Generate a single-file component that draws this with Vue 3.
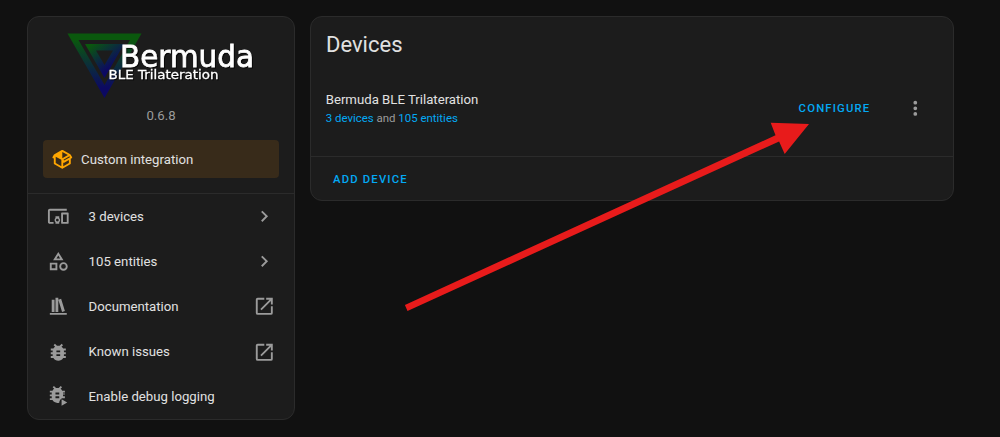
<template>
  <div class="page">
    <aside class="card info-card">
      <div class="brand">
        <svg class="logo" width="190" height="68" viewBox="0 0 190 68">
          <defs>
            <linearGradient id="outer" gradientUnits="userSpaceOnUse" x1="0" y1="0" x2="0" y2="65">
              <stop offset="0.1" stop-color="#0a580d" />
              <stop offset="0.85" stop-color="#0c0962" />
            </linearGradient>
            <linearGradient id="inner" gradientUnits="userSpaceOnUse" x1="26" y1="10" x2="44" y2="34">
              <stop offset="0" stop-color="#0a580d" />
              <stop offset="1" stop-color="#0c0962" />
            </linearGradient>
          </defs>
          <path fill="url(#outer)" fill-rule="evenodd" d="M0.500 0.500H74.500L37.500 65ZM11.500 7L37.500 52L63 7Z" />
          <path fill="url(#inner)" fill-rule="evenodd" d="M18 11H57L37.500 45ZM29 17.500L37.500 32L46 17.500Z" />
          <g class="logo-text">
            <text class="logo-name" x="53" y="34" textLength="134" lengthAdjust="spacingAndGlyphs">Bermuda</text>
            <text class="logo-tagline" x="41.500" y="46" textLength="110" lengthAdjust="spacingAndGlyphs">BLE Trilateration</text>
          </g>
        </svg>
      </div>
      <div class="version">0.6.8</div>
      <div class="custom-banner">
        <svg class="icon banner-icon" viewBox="0 0 24 24"><path :d="icons.package" /></svg>
        <span>Custom integration</span>
      </div>
      <nav class="links">
        <a v-for="item in links" :key="item.label" class="link-row">
          <svg class="icon" viewBox="0 0 24 24"><path :d="item.icon" /></svg>
          <span class="link-label">{{ item.label }}</span>
          <svg v-if="item.meta" class="icon" viewBox="0 0 24 24"><path :d="item.meta" /></svg>
        </a>
      </nav>
    </aside>

    <main class="card devices-card">
      <h1>Devices</h1>
      <div class="entry">
        <div class="entry-text">
          <div class="entry-name">Bermuda BLE Trilateration</div>
          <div class="entry-sub"><a>3 devices</a> and <a>105 entities</a></div>
        </div>
        <button class="text-button">Configure</button>
        <svg class="icon menu-icon" viewBox="0 0 24 24"><path :d="icons.dots" /></svg>
      </div>
      <div class="card-actions">
        <button class="text-button">Add device</button>
      </div>
    </main>

    <!-- Arrow pointing at the configure button -->
    <svg class="arrow" viewBox="0 0 1000 437">
      <path d="M404.900 304.900L775.500 135.200L770.700 122.700L809 124L784.700 154L779.100 141.400L407.500 311Z" />
    </svg>
  </div>
</template>

<script setup>
const icons = {
  package: 'M2,10.96C1.5,10.68 1.35,10.07 1.63,9.59L3.13,7C3.24,6.8 3.41,6.66 3.6,6.58L11.43,2.18C11.59,2.06 11.79,2 12,2C12.21,2 12.41,2.06 12.57,2.18L20.47,6.62C20.66,6.72 20.82,6.88 20.91,7.08L22.36,9.6C22.64,10.08 22.47,10.69 22,10.96L21,11.54V16.5C21,16.88 20.79,17.21 20.47,17.38L12.57,21.82C12.41,21.94 12.21,22 12,22C11.79,22 11.59,21.94 11.43,21.82L3.53,17.38C3.21,17.21 3,16.88 3,16.5V10.96C2.7,11.13 2.32,11.14 2,10.96M12,4.15V4.15L12,10.85V10.85L17.96,7.5L12,4.15M5,15.91L11,19.29V12.58L5,9.21V15.91M19,15.91V12.69L14,15.59C13.67,15.77 13.3,15.76 13,15.6V19.29L19,15.91M13.85,13.36L20.13,9.73L19.55,8.72L13.27,12.35L13.85,13.36Z',
  devices: 'M3 6H21V4H3C1.9 4 1 4.9 1 6V18C1 19.1 1.9 20 3 20H7V18H3V6M13 12H9V13.78C8.39 14.33 8 15.11 8 16C8 16.89 8.39 17.67 9 18.22V20H13V18.22C13.61 17.67 14 16.88 14 16S13.61 14.33 13 13.78V12M11 17.5C10.17 17.5 9.5 16.83 9.5 16S10.17 14.5 11 14.5 12.5 15.17 12.5 16 11.83 17.5 11 17.5M22 8H16C15.5 8 15 8.5 15 9V19C15 19.5 15.5 20 16 20H22C22.5 20 23 19.5 23 19V9C23 8.5 22.5 8 22 8M21 18H17V10H21V18Z',
  shapes: 'M11,13.5V21.5H3V13.5H11M9,15.5H5V19.5H9V15.5M12,2L17.5,11H6.5L12,2M12,5.86L10.08,9H13.92L12,5.86M17.5,13C20,13 22,15 22,17.5C22,20 20,22 17.5,22C15,22 13,20 13,17.5C13,15 15,13 17.5,13M17.5,15A2.5,2.5 0 0,0 15,17.5A2.5,2.5 0 0,0 17.5,20A2.5,2.5 0 0,0 20,17.5A2.5,2.5 0 0,0 17.5,15Z',
  bookshelf: 'M9 3V18H12V3H9M12 5L16 18L19 17L15 4L12 5M5 5V18H8V5H5M3 19V21H21V19H3Z',
  bug: 'M14,12H10V10H14M14,16H10V14H14M20,8H17.19C16.74,7.22 16.12,6.55 15.37,6.04L17,4.41L15.59,3L13.42,5.17C12.96,5.06 12.5,5 12,5C11.5,5 11.04,5.06 10.59,5.17L8.41,3L7,4.41L8.62,6.04C7.88,6.55 7.26,7.22 6.81,8H4V10H6.09C6.04,10.33 6,10.66 6,11V12H4V14H6V15C6,15.34 6.04,15.67 6.09,16H4V18H6.81C7.85,19.79 9.78,21 12,21C14.22,21 16.15,19.79 17.19,18H20V16H17.91C17.96,15.67 18,15.34 18,15V14H20V12H18V11C18,10.66 17.96,10.33 17.91,10H20V8Z',
  bugPlay: 'M13,9H9V7H13V9M13,13H9V11H13V13M19,7V5H16.19C15.74,4.22 15.12,3.55 14.37,3.04L16,1.41L14.59,0L12.42,2.17C11.5,1.95 10.5,1.95 9.59,2.17L7.41,0L6,1.41L7.62,3.04C6.88,3.55 6.26,4.22 5.81,5H3V7H5.09C5.04,7.33 5,7.66 5,8V9H3V11H5V12C5,12.34 5.04,12.67 5.09,13H3V15H5.81C6.85,16.79 8.78,18 11,18C11.7,18 12.4,17.88 13,17.66C13.1,15.5 14.3,13.9 16,13H19V11H17V9H19V8H17V7H19M15.5,14V21L21.5,17.5L15.5,14Z',
  openInNew: 'M14,3V5H17.59L7.76,14.83L9.17,16.24L19,6.41V10H21V3M19,19H5V5H12V3H5C3.89,3 3,3.9 3,5V19A2,2 0 0,0 5,21H19A2,2 0 0,0 21,19V12H19V19Z',
  chevron: 'M8.59,16.58L13.17,12L8.59,7.41L10,6L16,12L10,18L8.59,16.58Z',
  dots: 'M12,16A2,2 0 0,1 14,18A2,2 0 0,1 12,20A2,2 0 0,1 10,18A2,2 0 0,1 12,16M12,10A2,2 0 0,1 14,12A2,2 0 0,1 12,14A2,2 0 0,1 10,12A2,2 0 0,1 12,10M12,4A2,2 0 0,1 14,6A2,2 0 0,1 12,8A2,2 0 0,1 10,6A2,2 0 0,1 12,4Z'
};

const links = [
  { label: '3 devices', icon: icons.devices, meta: icons.chevron },
  { label: '105 entities', icon: icons.shapes, meta: icons.chevron },
  { label: 'Documentation', icon: icons.bookshelf, meta: icons.openInNew },
  { label: 'Known issues', icon: icons.bug, meta: icons.openInNew },
  { label: 'Enable debug logging', icon: icons.bugPlay }
];
</script>

<style>
body {
  margin: 0;
  background: #111111;
}
</style>

<style scoped>
.page {
  position: relative;
  box-sizing: border-box;
  width: 1000px;
  height: 437px;
  padding: 16px 46px 0 27px;
  display: flex;
  align-items: flex-start;
  gap: 15px;
  overflow: hidden;
  background: #111111;
  color: #e1e1e1;
  font-family: Roboto, sans-serif;
  font-size: 13.2px;
}

.card {
  box-sizing: border-box;
  background: #1c1c1c;
  border: 1px solid #2b2b2b;
  border-radius: 12px;
}

.info-card {
  width: 268px;
  height: 404px;
}

.brand {
  height: 82px;
  padding: 16px 0 0 39px;
  box-sizing: border-box;
}

.logo {
  display: block;
  overflow: visible;
}

.logo-text {
  fill: #ffffff;
  stroke: #ffffff;
  font-family: "DejaVu Sans", sans-serif;
  filter: drop-shadow(1px 1px 0.5px rgba(0, 0, 0, 0.7));
}

.logo-name {
  font-size: 30px;
  stroke-width: 0.8px;
}

.logo-tagline {
  font-size: 12.5px;
  stroke-width: 0.3px;
}

.version {
  height: 34px;
  line-height: 34px;
  text-align: center;
  color: #9b9b9b;
}

.custom-banner {
  display: flex;
  align-items: center;
  gap: 7.5px;
  height: 38px;
  margin: 7px 15px 15px;
  padding-left: 8px;
  box-sizing: border-box;
  border-radius: 4px;
  background: #382b1a;
}

.icon {
  flex: none;
  width: 22.6px;
  height: 22.6px;
  fill: #9b9b9b;
}

.banner-icon {
  fill: #ffa600;
}

.links {
  border-top: 1px solid #2b2b2b;
}

.link-row {
  display: flex;
  align-items: center;
  height: 45.1px;
  padding: 0 18.3px 0 19px;
}

.link-label {
  flex: 1;
  margin-left: 19px;
}

.devices-card {
  flex: 1;
  height: 185px;
}

h1 {
  margin: 0;
  padding: 13px 15px 0;
  height: 56px;
  box-sizing: border-box;
  font-size: 22px;
  line-height: 30px;
  font-weight: 400;
}

.entry {
  display: flex;
  align-items: center;
  height: 71px;
  padding: 0 26px 0 14.7px;
  margin-bottom: 12px;
}

.entry-text {
  flex: 1;
  line-height: 19px;
}

.entry-sub {
  font-size: 11.45px;
  line-height: 18px;
  color: #9b9b9b;
}

.entry-sub a {
  color: #03a9f4;
}

.text-button {
  padding: 0 7.5px;
  border: none;
  background: none;
  color: #03a9f4;
  font: 500 11.3px Roboto, sans-serif;
  letter-spacing: 1.18px;
  text-transform: uppercase;
}

.menu-icon {
  margin-left: 26.5px;
}

.card-actions {
  display: flex;
  align-items: center;
  height: 44px;
  padding-left: 14.5px;
  border-top: 1px solid #2b2b2b;
}

.arrow {
  position: absolute;
  inset: 0;
  width: 1000px;
  height: 437px;
  fill: #e81b1b;
  pointer-events: none;
}
</style>
